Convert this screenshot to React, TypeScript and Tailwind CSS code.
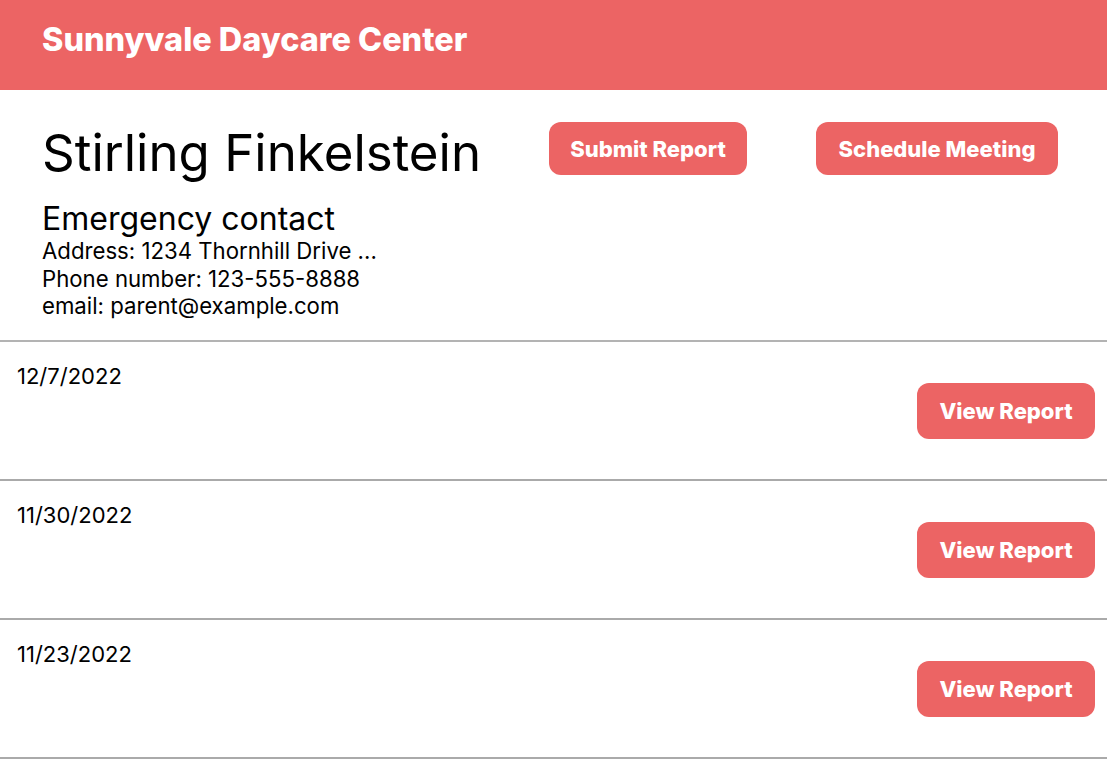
import React from "react";

const reports = ["12/7/2022", "11/30/2022", "11/23/2022"];

function Btn({ children, className = "" }: { children: React.ReactNode; className?: string }) {
  return (
    <button
      className={
        "bg-[#ec6464] text-white font-extrabold text-[22px] leading-none rounded-[12px] flex items-center justify-center " +
        className
      }
    >
      {children}
    </button>
  );
}

export default function App() {
  return (
    <div className="w-[1107px] h-[763px] bg-white text-black overflow-hidden font-['Inter','Liberation_Sans',sans-serif]">
      <header className="h-[90px] bg-[#ec6464] flex items-center pl-[42px] pb-[10px]">
        <h1 className="text-white font-extrabold text-[32.4px] leading-none">Sunnyvale Daycare Center</h1>
      </header>

      <section className="h-[252px] border-b-2 border-[#b3b3b3] pl-[42px] pt-[32px]">
        <div className="flex items-start">
          <div className="text-[51px] leading-[60px] mt-[1px] w-[507px] whitespace-nowrap">Stirling Finkelstein</div>
          <Btn className="w-[198px] h-[53px]">Submit Report</Btn>
          <Btn className="w-[242px] h-[53px] ml-[69px]">Schedule Meeting</Btn>
        </div>
        <div className="mt-[18px] text-[32px] leading-[36px]">Emergency contact</div>
        <div className="text-[22.2px] leading-[27.5px] mt-[0px]">
          <div>Address: 1234 Thornhill Drive ...</div>
          <div>Phone number: 123-555-8888</div>
          <div>email: parent@example.com</div>
        </div>
      </section>

      {reports.map((d) => (
        <div key={d} className="h-[139px] border-b-2 border-[#aaaaaa] flex justify-between pl-[17px] pr-[12px]">
          <div className="text-[22px] leading-[28px] pt-[20px]">{d}</div>
          <Btn className="w-[178px] h-[56px] self-center">View Report</Btn>
        </div>
      ))}
    </div>
  );
}
